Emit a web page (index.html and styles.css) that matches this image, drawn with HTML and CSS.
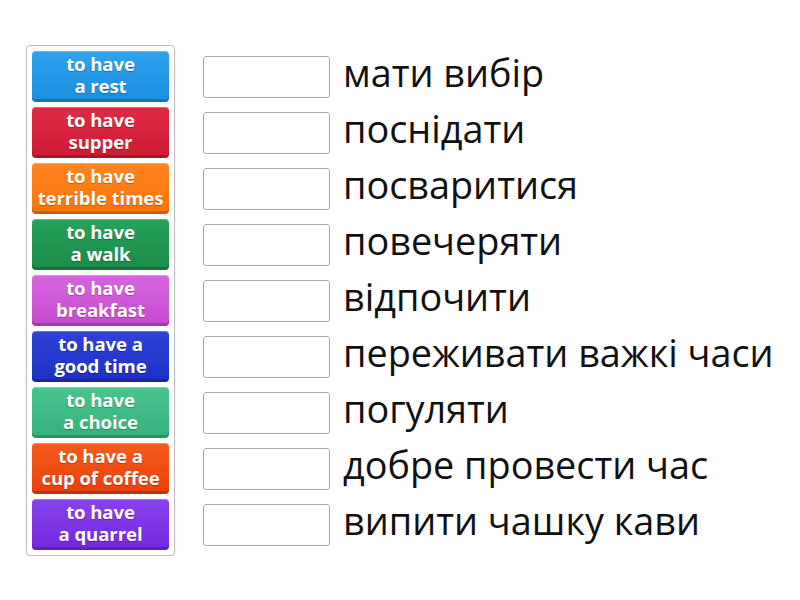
FILE: index.html
```html
<!DOCTYPE html>
<html>
<head>
<meta charset="utf-8">
<link rel="stylesheet" href="styles.css">
</head>
<body>
<div class="page">
  <div class="panel">
    <div class="tile c1">to have<br>a rest</div>
    <div class="tile c2">to have<br>supper</div>
    <div class="tile c3">to have<br>terrible times</div>
    <div class="tile c4">to have<br>a walk</div>
    <div class="tile c5">to have<br>breakfast</div>
    <div class="tile c6">to have a<br>good time</div>
    <div class="tile c7">to have<br>a choice</div>
    <div class="tile c8">to have a<br>cup of coffee</div>
    <div class="tile c9">to have<br>a quarrel</div>
  </div>
  <div class="list">
    <div class="row"><div class="box"></div><span class="label">мати вибір</span></div>
    <div class="row"><div class="box"></div><span class="label">поснідати</span></div>
    <div class="row"><div class="box"></div><span class="label">посваритися</span></div>
    <div class="row"><div class="box"></div><span class="label">повечеряти</span></div>
    <div class="row"><div class="box"></div><span class="label">відпочити</span></div>
    <div class="row"><div class="box"></div><span class="label">переживати важкі часи</span></div>
    <div class="row"><div class="box"></div><span class="label">погуляти</span></div>
    <div class="row"><div class="box"></div><span class="label">добре провести час</span></div>
    <div class="row"><div class="box"></div><span class="label">випити чашку кави</span></div>
  </div>
</div>
</body>
</html>
```
FILE: styles.css
```css
html, body {
  margin: 0;
  padding: 0;
  background: #ffffff;
  font-family: "Open Sans", "Noto Sans", sans-serif;
}
.page {
  display: flex;
  align-items: flex-start;
  padding: 45px 0 0 26px;
}
.panel {
  display: flex;
  flex-direction: column;
  gap: 5px;
  padding: 5px;
  border: 1px solid #bdbdbd;
  border-radius: 4px;
  box-shadow: 0 1px 2px rgba(0,0,0,0.12);
}
.tile {
  width: 137px;
  height: 51px;
  box-sizing: border-box;
  border-radius: 4px;
  display: flex;
  align-items: center;
  justify-content: center;
  text-align: center;
  color: #fff;
  font-weight: 700;
  font-size: 18.6px;
  line-height: 22px;
  letter-spacing: -0.1px;
  white-space: nowrap;
  text-shadow: 0 1px 1px rgba(0,0,0,0.25);
  box-shadow: inset 0 1px 0 rgba(255,255,255,0.25), inset 0 -3px 0 rgba(0,0,0,0.18);
  padding-bottom: 3px;
}
.c1 { background: linear-gradient(#2ea3ef, #1b8ee0); }
.c2 { background: linear-gradient(#e12b43, #cc1b33); }
.c3 { background: linear-gradient(#ff8420, #fb740a); }
.c4 { background: linear-gradient(#27a25a, #1b8a48); }
.c5 { background: linear-gradient(#d665de, #c64ad0); }
.c6 { background: linear-gradient(#2e43d8, #1f2fc4); }
.c7 { background: linear-gradient(#48c58f, #35b27c); }
.c8 { background: linear-gradient(#f85a1c, #e9400a); }
.c9 { background: linear-gradient(#8842ee, #7328e0); }
.list {
  display: flex;
  flex-direction: column;
  gap: 14px;
  margin-left: 28px;
  padding-top: 11px;
}
.row {
  display: flex;
  align-items: center;
  height: 42px;
  gap: 13px;
}
.box {
  width: 127px;
  height: 42px;
  box-sizing: border-box;
  border: 1px solid #a8a8a8;
  border-radius: 3px;
  background: #fff;
  flex: none;
}
.label {
  font-size: 37.8px;
  color: #111;
  white-space: nowrap;
  line-height: 42px;
  position: relative;
  top: -4px;
}
```
